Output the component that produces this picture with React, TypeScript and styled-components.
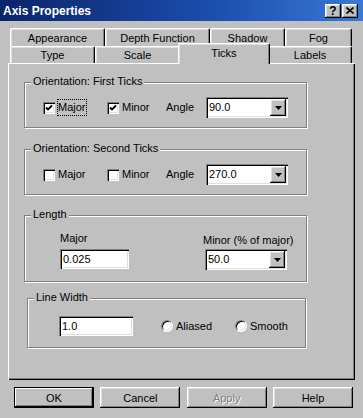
import React from "react";
import styled, { createGlobalStyle, css } from "styled-components";

const Global = createGlobalStyle`
  html, body { margin: 0; padding: 0; background: #c0c0c0; }
  body { font-family: "Liberation Sans", Arial, sans-serif; font-size: 11px; color: #000; }
  * { box-sizing: border-box; }
`;

const raised = css`
  box-shadow: inset -1px -1px #000, inset 1px 1px #fff, inset -2px -2px #808080, inset 2px 2px #dfdfdf;
`;
const sunken = css`
  box-shadow: inset 1px 1px #808080, inset 2px 2px #000, inset -1px -1px #fff, inset -2px -2px #dfdfdf;
`;

const Window = styled.div`
  width: 363px;
  height: 418px;
  background: #c0c0c0;
  display: flex;
  flex-direction: column;
  overflow: hidden;
`;

const TitleBar = styled.div`
  height: 21px;
  flex: none;
  display: flex;
  align-items: center;
  padding: 0 5px 0 3px;
  background: linear-gradient(90deg, #0a246a 0%, #1c4fb0 60%, #3a78d6 100%);
  color: #fff;
  font-weight: bold;
  font-size: 12px;
`;

const Title = styled.span`
  flex: 1;
`;

const CaptionButton = styled.div<{ $gap?: number }>`
  width: 16px;
  height: 14px;
  background: #c0c0c0;
  display: flex;
  align-items: center;
  justify-content: center;
  margin-left: ${(p) => p.$gap ?? 0}px;
  color: #000;
  font-weight: bold;
  font-size: 12px;
  ${raised};
`;

const Body = styled.div`
  padding: 7px 8px 0 8px;
  display: flex;
  flex-direction: column;
`;

const TabStrip = styled.div`
  margin-left: 2px;
  width: 342px;
  display: flex;
  flex-direction: column;
`;

const TabRow = styled.div<{ $h: number }>`
  display: flex;
  align-items: flex-start;
  height: ${(p) => p.$h}px;
`;

const Tab = styled.div<{ $w: number; $h: number; $active?: boolean }>`
  width: ${(p) => p.$w}px;
  height: ${(p) => p.$h}px;
  flex: none;
  display: flex;
  align-items: center;
  justify-content: center;
  background: #c0c0c0;
  border-top: 1px solid #fff;
  border-left: 1px solid #fff;
  border-right: 1px solid #000;
  border-radius: 2px 2px 0 0;
  box-shadow: inset -1px 0 #808080, inset 1px 1px #dfdfdf;
  ${(p) =>
    p.$active &&
    css`
      position: relative;
      z-index: 1;
      margin: -3px -2px 0 -2px;
      padding-bottom: 2px;
    `}
`;

const Panel = styled.div`
  width: 347px;
  height: 317px;
  display: flex;
  flex-direction: column;
  padding-left: 16px;
  box-shadow: inset 1px 1px #fff, inset -1px -1px #000, inset -2px -2px #808080;
`;

const Group = styled.div<{ $top: number; $h: number; $left?: number; $w?: number }>`
  position: relative;
  flex: none;
  margin-top: ${(p) => p.$top}px;
  margin-left: ${(p) => p.$left ?? 0}px;
  width: ${(p) => p.$w ?? 283}px;
  height: ${(p) => p.$h}px;
  border: 1px solid #808080;
  box-shadow: 1px 1px 0 #fff, inset 1px 1px 0 #fff;
`;

const GroupLabel = styled.span`
  position: absolute;
  top: -8px;
  left: 6px;
  padding: 0 2px;
  line-height: 13px;
  background: #c0c0c0;
  white-space: nowrap;
`;

const Row = styled.div<{ $pt: number; $pl: number }>`
  display: flex;
  align-items: center;
  padding-top: ${(p) => p.$pt}px;
  padding-left: ${(p) => p.$pl}px;
`;

const CheckItem = styled.div<{ $w: number }>`
  width: ${(p) => p.$w}px;
  flex: none;
  display: flex;
  align-items: center;
`;

const CheckBox = styled.div`
  width: 12px;
  height: 12px;
  flex: none;
  background: #fff;
  display: flex;
  align-items: center;
  justify-content: center;
  ${sunken};
`;

const ItemLabel = styled.span<{ $focus?: boolean }>`
  margin-left: 2px;
  padding: 1px 0;
  line-height: 13px;
  border: 1px dotted ${(p) => (p.$focus ? "#000" : "transparent")};
  white-space: nowrap;
`;

const FieldLabel = styled.span<{ $w?: number }>`
  width: ${(p) => (p.$w ? `${p.$w}px` : "auto")};
  flex: none;
  line-height: 13px;
  white-space: nowrap;
`;

const Combo = styled.div<{ $w: number; $ml?: number; $mt?: number }>`
  width: ${(p) => p.$w}px;
  height: 21px;
  flex: none;
  margin-left: ${(p) => p.$ml ?? 0}px;
  margin-top: ${(p) => p.$mt ?? 0}px;
  background: #fff;
  display: flex;
  align-items: center;
  padding: 2px 2px 2px 3px;
  ${sunken};
`;

const ComboText = styled.span`
  flex: 1;
  line-height: 13px;
`;

const DropButton = styled.div`
  width: 16px;
  height: 17px;
  background: #c0c0c0;
  display: flex;
  align-items: center;
  justify-content: center;
  ${raised};
`;

const TextInput = styled.div<{ $w: number; $mt?: number }>`
  width: ${(p) => p.$w}px;
  height: 20px;
  flex: none;
  margin-top: ${(p) => p.$mt ?? 0}px;
  background: #fff;
  display: flex;
  align-items: center;
  padding-left: 3px;
  line-height: 13px;
  ${sunken};
`;

const Column = styled.div<{ $pt: number; $ml: number }>`
  display: flex;
  flex-direction: column;
  align-items: flex-start;
  padding-top: ${(p) => p.$pt}px;
  margin-left: ${(p) => p.$ml}px;
`;

const RadioItem = styled.div<{ $w?: number; $ml?: number }>`
  width: ${(p) => (p.$w ? `${p.$w}px` : "auto")};
  margin-left: ${(p) => p.$ml ?? 0}px;
  flex: none;
  display: flex;
  align-items: center;
`;

const RadioDot = styled.div`
  width: 12px;
  height: 12px;
  border-radius: 50%;
  background: #fff;
  border: 1px solid;
  border-color: #808080 #fff #fff #808080;
  box-shadow: inset 1px 1px #000, inset -1px -1px #dfdfdf;
`;

const ButtonRow = styled.div`
  margin: 7px 0 0 6px;
  width: 339px;
  display: flex;
  justify-content: space-between;
`;

const Button = styled.div<{ $default?: boolean; $disabled?: boolean }>`
  width: 80px;
  height: 21px;
  display: flex;
  align-items: center;
  justify-content: center;
  background: #c0c0c0;
  ${raised};
  ${(p) =>
    p.$default &&
    css`
      box-shadow: inset 0 0 0 1px #000, inset -2px -2px #000, inset 2px 2px #fff, inset -3px -3px #808080;
    `}
  ${(p) =>
    p.$disabled &&
    css`
      color: #808080;
      text-shadow: 1px 1px #fff;
    `}
`;

const Check = () => (
  <svg width="8" height="8" viewBox="0 0 8 8">
    <path d="M1 3.5 L3 5.5 L7 1.5" fill="none" stroke="#000" strokeWidth="1.8" />
  </svg>
);

const Arrow = () => (
  <svg width="7" height="4" viewBox="0 0 7 4">
    <path d="M0 0 H7 L3.5 4 Z" fill="#000" />
  </svg>
);

const CloseX = () => (
  <svg width="8" height="7" viewBox="0 0 8 7">
    <path d="M0.5 0.5 L7.5 6.5 M7.5 0.5 L0.5 6.5" stroke="#000" strokeWidth="1.6" />
  </svg>
);

const ComboBox = ({ value, w, ml, mt }: { value: string; w: number; ml?: number; mt?: number }) => (
  <Combo $w={w} $ml={ml} $mt={mt}>
    <ComboText>{value}</ComboText>
    <DropButton>
      <Arrow />
    </DropButton>
  </Combo>
);

const OrientationRow = ({ checked, value }: { checked: boolean; value: string }) => (
  <Row $pt={14} $pl={18}>
    <CheckItem $w={64}>
      <CheckBox>{checked && <Check />}</CheckBox>
      <ItemLabel $focus={checked}>Major</ItemLabel>
    </CheckItem>
    <CheckItem $w={59}>
      <CheckBox>{checked && <Check />}</CheckBox>
      <ItemLabel>Minor</ItemLabel>
    </CheckItem>
    <FieldLabel $w={40}>Angle</FieldLabel>
    <ComboBox value={value} w={82} />
  </Row>
);

export default function App() {
  return (
    <>
      <Global />
      <Window>
        <TitleBar>
          <Title>Axis Properties</Title>
          <CaptionButton>?</CaptionButton>
          <CaptionButton $gap={1}>
            <CloseX />
          </CaptionButton>
        </TitleBar>
        <Body>
          <TabStrip>
            <TabRow $h={18}>
              <Tab $w={95} $h={18}>Appearance</Tab>
              <Tab $w={105} $h={18}>Depth Function</Tab>
              <Tab $w={75} $h={18}>Shadow</Tab>
              <Tab $w={67} $h={18}>Fog</Tab>
            </TabRow>
            <TabRow $h={17}>
              <Tab $w={85} $h={17}>Type</Tab>
              <Tab $w={85} $h={17}>Scale</Tab>
              <Tab $w={92} $h={21} $active>
                Ticks
              </Tab>
              <Tab $w={84} $h={17}>Labels</Tab>
            </TabRow>
          </TabStrip>
          <Panel>
            <Group $top={19} $h={46}>
              <GroupLabel>Orientation: First Ticks</GroupLabel>
              <OrientationRow checked value="90.0" />
            </Group>
            <Group $top={21} $h={46}>
              <GroupLabel>Orientation: Second Ticks</GroupLabel>
              <OrientationRow checked={false} value="270.0" />
            </Group>
            <Group $top={20} $h={67}>
              <GroupLabel>Length</GroupLabel>
              <Row $pt={0} $pl={35}>
                <Column $pt={15} $ml={0}>
                  <FieldLabel>Major</FieldLabel>
                  <TextInput $w={69} $mt={4}>0.025</TextInput>
                </Column>
                <Column $pt={18} $ml={74}>
                  <FieldLabel>Minor (% of major)</FieldLabel>
                  <ComboBox value="50.0" w={82} ml={2} mt={2} />
                </Column>
              </Row>
            </Group>
            <Group $top={16} $h={50} $left={3} $w={279}>
              <GroupLabel>Line Width</GroupLabel>
              <Row $pt={17} $pl={31}>
                <TextInput $w={74}>1.0</TextInput>
                <RadioItem $w={74} $ml={28}>
                  <RadioDot />
                  <ItemLabel>Aliased</ItemLabel>
                </RadioItem>
                <RadioItem>
                  <RadioDot />
                  <ItemLabel>Smooth</ItemLabel>
                </RadioItem>
              </Row>
            </Group>
          </Panel>
          <ButtonRow>
            <Button $default>OK</Button>
            <Button>Cancel</Button>
            <Button $disabled>Apply</Button>
            <Button>Help</Button>
          </ButtonRow>
        </Body>
      </Window>
    </>
  );
}
